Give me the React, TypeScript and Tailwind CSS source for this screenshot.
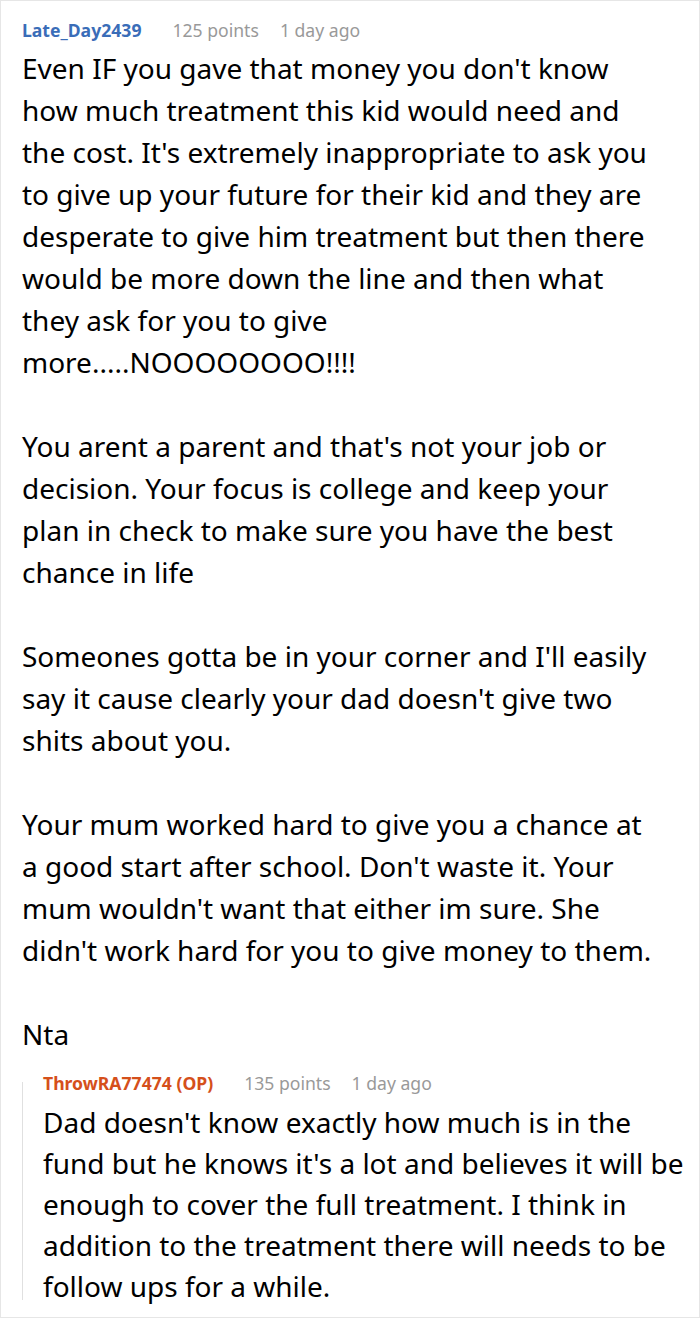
export default function App() {
  return (
    <div
      className="w-[700px] h-[1318px] overflow-hidden border border-[#e6e6e6] bg-white text-black"
      style={{ fontFamily: '"Noto Sans", "Open Sans", sans-serif' }}
    >
      <div className="pl-[21px] pr-[44px] pt-[17px]">
        <div className="flex items-center text-[17.6px] leading-[24px]">
          <span className="font-bold text-[#3a6db8]">Late_Day2439</span>
          <span className="ml-[31px] text-[#999999]">125 points</span>
          <span className="ml-[21px] text-[#999999]">1 day ago</span>
        </div>
        <div className="text-[28px] leading-[42px] mt-[5px] space-y-[42px]">
          <p>
            Even IF you gave that money you don't know how much treatment this kid would need and the cost. It's
            extremely inappropriate to ask you to give up your future for their kid and they are desperate to give
            him treatment but then there would be more down the line and then what they ask for you to give
            more.....NOOOOOOOO!!!!
          </p>
          <p>
            You arent a parent and that's not your job or decision. Your focus is college and keep your plan in check
            to make sure you have the best chance in life
          </p>
          <p>
            Someones gotta be in your corner and I'll easily say it cause clearly your dad doesn't give two shits about
            you.
          </p>
          <p>
            Your mum worked hard to give you a chance at a good start after school. Don't waste it. Your mum wouldn't
            want that either im sure. She didn't work hard for you to give money to them.
          </p>
          <p>Nta</p>
        </div>
      </div>
      <div className="flex ml-[21px] mr-[12px] mt-[16px]">
        <div className="w-px bg-[#e0e0e0] mt-[11px] mb-[7px] shrink-0" />
        <div className="pl-[20px] flex-1">
          <div className="flex items-center text-[17.6px] leading-[24px]">
            <span className="font-bold text-[#d5501b]">ThrowRA77474 (OP)</span>
            <span className="ml-[31px] text-[#999999]">135 points</span>
            <span className="ml-[21px] text-[#999999]">1 day ago</span>
          </div>
          <p className="text-[28px] leading-[41px] mt-[7px]">
            Dad doesn't know exactly how much is in the fund but he knows it's a lot and believes it will be enough to
            cover the full treatment. I think in addition to the treatment there will needs to be follow ups for a
            while.
          </p>
        </div>
      </div>
    </div>
  );
}
